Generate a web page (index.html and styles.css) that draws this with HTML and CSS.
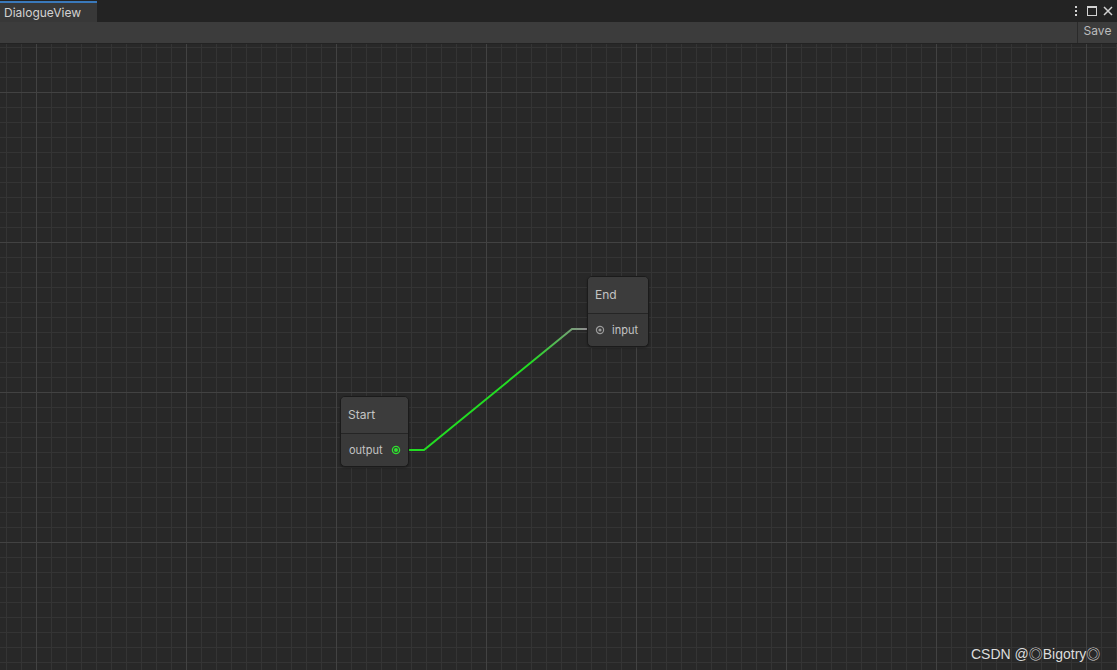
FILE: index.html
```html
<!DOCTYPE html>
<html>
<head>
<meta charset="utf-8">
<link rel="stylesheet" href="styles.css">
</head>
<body>
<div class="window">
  <div class="tabbar">
    <div class="tab">DialogueView</div>
    <div class="tab-actions">
      <svg class="ico" width="12" height="12" viewBox="0 0 12 12"><rect x="5" y="1" width="2" height="2" fill="#d2d2d2"/><rect x="5" y="5" width="2" height="2" fill="#d2d2d2"/><rect x="5" y="9" width="2" height="2" fill="#d2d2d2"/></svg>
      <svg class="ico" width="12" height="12" viewBox="0 0 12 12"><rect x="1.5" y="1.5" width="9" height="9" fill="none" stroke="#d2d2d2" stroke-width="1"/><rect x="1" y="1" width="10" height="2" fill="#d2d2d2"/></svg>
      <svg class="ico" width="12" height="12" viewBox="0 0 12 12"><path d="M2 2 L10 10 M10 2 L2 10" stroke="#d2d2d2" stroke-width="1.5"/></svg>
    </div>
  </div>
  <div class="toolbar">
    <div class="save-btn">Save</div>
  </div>
  <div class="canvas">
    <svg class="edges" width="1117" height="627" viewBox="0 0 1117 627">
      <defs>
        <linearGradient id="eg" gradientUnits="userSpaceOnUse" x1="530" y1="0" x2="585" y2="0">
          <stop offset="0" stop-color="#22dd22"/>
          <stop offset="1" stop-color="#8e8e8e"/>
        </linearGradient>
      </defs>
      <path d="M408 406 L424 406 L572 285 L590 285" fill="none" stroke="url(#eg)" stroke-width="2"/>
    </svg>
    <div class="node node-start">
      <div class="node-title">Start</div>
      <div class="node-body out">
        <span class="port-label">output</span>
        <svg class="port" width="10" height="10" viewBox="0 0 10 10"><circle cx="5" cy="5" r="3.6" fill="none" stroke="#2fe02f" stroke-width="1.3"/><circle cx="5" cy="5" r="2" fill="#2fe02f"/></svg>
      </div>
    </div>
    <div class="node node-end">
      <div class="node-title">End</div>
      <div class="node-body in">
        <svg class="port" width="10" height="10" viewBox="0 0 10 10"><circle cx="5" cy="5" r="3.6" fill="none" stroke="#9a9a9a" stroke-width="1.2"/><circle cx="5" cy="5" r="1.6" fill="#9a9a9a"/></svg>
        <span class="port-label">input</span>
      </div>
    </div>
    <div class="watermark">CSDN @◎Bigotry◎</div>
  </div>
</div>
</body>
</html>
```
FILE: styles.css
```css
html, body {
  margin: 0;
  padding: 0;
  width: 1117px;
  height: 670px;
  overflow: hidden;
  background: #282828;
  font-family: Inter, "Noto Sans", "Liberation Sans", sans-serif;
}
.window {
  display: flex;
  flex-direction: column;
  width: 1117px;
  height: 670px;
}
.tabbar {
  height: 22px;
  background: #232323;
  display: flex;
  align-items: stretch;
  flex-shrink: 0;
}
.tab {
  width: 93px;
  padding-left: 4px;
  background: #383838;
  border-top: 2px solid #3a79bb;
  color: #d2d2d2;
  font-size: 12px;
  line-height: 19px;
  margin-top: 1px;
}
.tab-actions {
  margin-left: auto;
  display: flex;
  align-items: center;
  gap: 4px;
  padding-right: 3px;
}
.ico { display: block; }
.toolbar {
  height: 21px;
  background: #3c3c3c;
  border-bottom: 1px solid #232323;
  display: flex;
  justify-content: flex-end;
  flex-shrink: 0;
}
.save-btn {
  width: 39px;
  border-left: 1px solid #2a2a2a;
  color: #bdbdbd;
  font-size: 12px;
  line-height: 18px;
  text-align: center;
  background: #3c3c3c;
}
.canvas {
  position: relative;
  flex: 1;
  background-color: #282828;
  background-image:
    linear-gradient(to right, #424242 1px, transparent 1px),
    linear-gradient(to bottom, #424242 1px, transparent 1px),
    linear-gradient(to right, #343434 1px, transparent 1px),
    linear-gradient(to bottom, #343434 1px, transparent 1px);
  background-size: 150px 150px, 150px 150px, 15px 15px, 15px 15px;
  background-position: 36px 0, 0 48px, 6px 0, 0 3px;
  overflow: hidden;
}
.edges {
  position: absolute;
  left: 0;
  top: 0;
}
.node {
  position: absolute;
  border: 1px solid #1b1b1b;
  border-radius: 5px;
  overflow: hidden;
  background: #393939;
  color: #c4c4c4;
  box-shadow: 0 1px 2px rgba(0,0,0,0.3);
}
.node-start { left: 340px; top: 352px; width: 67px; }
.node-end { left: 587px; top: 232px; width: 60px; }
.node-title {
  height: 36px;
  background: #3c3c3c;
  border-bottom: 1px solid #252525;
  font-size: 12px;
  line-height: 36px;
  padding-left: 7px;
}
.node-body {
  height: 32px;
  display: flex;
  align-items: center;
  font-size: 11px;
}
.node-body.out { padding-left: 8px; gap: 8px; }
.node-body.in { padding-left: 7px; gap: 7px; }
.port { display: block; }
.port-label { line-height: 14px; }
.watermark {
  position: absolute;
  left: 971px;
  top: 599px;
  color: #dcdcdc;
  font-size: 14px;
  font-family: "Liberation Sans", "Noto Sans CJK SC", sans-serif;
}
```
